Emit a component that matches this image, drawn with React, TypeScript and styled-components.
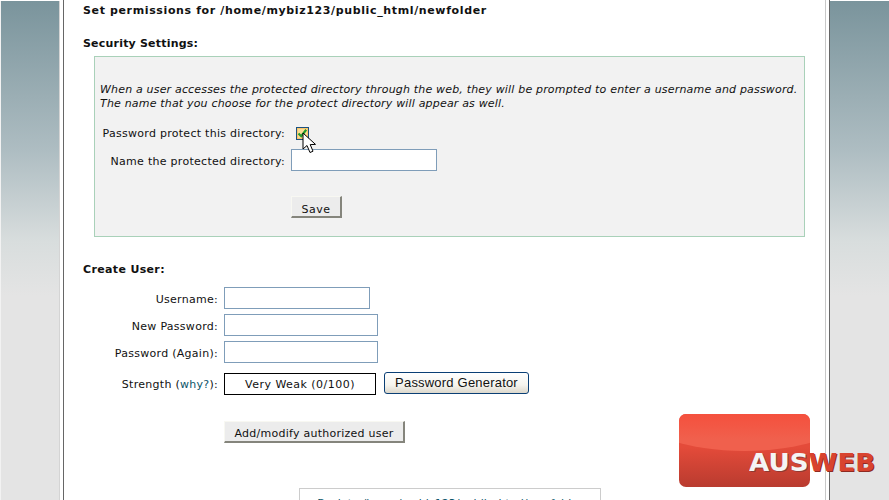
import React from "react";
import styled, { createGlobalStyle } from "styled-components";

const Global = createGlobalStyle`
  html, body { margin: 0; padding: 0; background: #fff; }
  body { font-family: "DejaVu Sans", Verdana, sans-serif; font-size: 11px; color: #111; }
`;

const Page = styled.div`
  position: relative;
  display: flex;
  width: 889px;
  height: 500px;
  overflow: hidden;
  background: #fff;
`;

const SIDE_FILL = "linear-gradient(180deg, #7a949c 0, #aebdc2 150px, #d8dddd 240px, #e4e4e4 295px, #e4e4e4 100%)";

const LeftSide = styled.div`
  flex: 0 0 58px;
  height: 499px;
  margin-top: 1px;
  background: ${SIDE_FILL};
  border-left: 1px solid #f2f2f2;
  border-right: 1px solid #d4d4d4;
`;

const RightSide = styled.div`
  flex: 0 0 59px;
  height: 499px;
  margin-top: 1px;
  background: ${SIDE_FILL};
`;

const Main = styled.main`
  flex: 1;
  margin-left: 3px;
  height: 500px;
  border-left: 1px solid #666;
  border-right: 1px solid #666;
  position: relative;
  padding: 0 0 0 19px;
`;

const RightEdge = styled.span`
  position: absolute;
  top: 0;
  right: 3px;
  width: 1px;
  height: 500px;
  background: #c8c8c8;
`;

const Heading = styled.h2<{ $top: number; $spacing: number }>`
  margin: ${(p) => p.$top}px 0 0;
  font-size: 11px;
  line-height: 14px;
  font-weight: 700;
  color: #111;
  letter-spacing: ${(p) => p.$spacing}px;
  white-space: nowrap;
`;

const Panel = styled.section`
  box-sizing: border-box;
  width: 711px;
  height: 181px;
  margin: 5px 0 0 11px;
  padding: 26px 0 0;
  background: #f2f2f2;
  border: 1px solid #a9d1b9;
`;

const Note = styled.p`
  margin: 0 0 0 5px;
  font-style: italic;
  line-height: 14px;
  letter-spacing: 0.18px;
  white-space: nowrap;
`;

const PanelForm = styled.div`
  display: grid;
  grid-template-columns: 190px 1fr;
  column-gap: 6px;
  align-items: center;
  margin-top: 16px;
`;

const Label = styled.label`
  padding-top: 4px;
  text-align: right;
  line-height: 14px;
  letter-spacing: 0.28px;
  white-space: nowrap;
`;

const CheckLabel = styled(Label)`
  align-self: start;
  padding-top: 0;
`;

const CheckCell = styled.div`
  height: 12px;
  margin-bottom: 10px;
  display: flex;
  align-items: center;
`;

const CheckBox = styled.span`
  box-sizing: border-box;
  display: flex;
  width: 13px;
  height: 13px;
  margin-left: 5px;
  background: #fbdc95;
  border: 1px solid #1c5180;
  box-shadow: inset 0 0 0 1px #f9c66a;
`;

const TextInput = styled.input<{ $w: number }>`
  box-sizing: border-box;
  display: block;
  width: ${(p) => p.$w}px;
  height: 22px;
  padding: 0 3px;
  background: #fff;
  border: 1px solid #7f9db9;
  border-radius: 0;
  outline: none;
`;

const FlatButton = styled.button`
  box-sizing: border-box;
  display: block;
  height: 22px;
  padding: 4px 0 0;
  font: 11px "DejaVu Sans", Verdana, sans-serif;
  color: #111;
  background: #ececec;
  border-style: solid;
  border-width: 1px 2px 2px 1px;
  border-color: #f8f8f2 #85857c #85857c #f8f8f2;
  letter-spacing: 0.25px;
`;

const SaveButton = styled(FlatButton)`
  width: 51px;
  margin-top: 25px;
  padding-top: 5px;
  grid-column: 2;
  letter-spacing: 0.5px;
`;

const UserForm = styled.div`
  display: grid;
  grid-template-columns: 135px 1fr;
  column-gap: 6px;
  row-gap: 5px;
  align-items: center;
  margin-top: 10px;
`;

const StrengthCell = styled.div`
  display: flex;
  align-items: flex-start;
  gap: 8px;
  margin-top: 4px;
`;

const StrengthLabel = styled(Label)`
  margin-top: 6px;
  padding-top: 0;
`;

const StrengthBox = styled.div`
  box-sizing: border-box;
  width: 152px;
  height: 22px;
  margin-top: 1px;
  border: 1px solid #000;
  text-align: center;
  line-height: 22px;
  letter-spacing: 0.47px;
`;

const GeneratorButton = styled.button`
  box-sizing: border-box;
  width: 145px;
  height: 22px;
  padding: 0 0 1px;
  font: 13px "Liberation Sans", Arial, sans-serif;
  letter-spacing: 0.2px;
  color: #111;
  background: linear-gradient(180deg, #fff 0, #f5f4ee 60%, #dcd8cc 100%);
  border: 1px solid #0a3f75;
  border-radius: 3px;
`;

const Link = styled.a`
  color: #0b5468;
  text-decoration: none;
`;

const AddButton = styled(FlatButton)`
  width: 181px;
  margin: 26px 0 0 141px;
`;

const BackBox = styled.div`
  box-sizing: border-box;
  width: 302px;
  height: 40px;
  margin: 45px 0 0 216px;
  padding-top: 8px;
  border: 1px solid #ccc;
  text-align: center;
  line-height: 14px;
  letter-spacing: 0.05px;
  white-space: nowrap;
`;

const Cursor = styled.svg`
  position: absolute;
  left: 302px;
  top: 132px;
`;

const Logo = styled.div`
  position: absolute;
  left: 679px;
  top: 414px;
  width: 131px;
  height: 73px;
  border-radius: 7px;
  background: linear-gradient(180deg, #e44b3a 45%, #b93b2f 100%);
  overflow: hidden;
`;

const LogoGloss = styled.div`
  position: absolute;
  left: -40px;
  top: -40px;
  width: 211px;
  height: 77px;
  border-radius: 0 0 50% 50%;
  background: linear-gradient(180deg, #f54f3c 50%, #f0604d 85%);
`;

const LogoText = styled.div`
  position: absolute;
  left: 749px;
  top: 449px;
  height: 28px;
  font: 700 24px/28px "DejaVu Sans", sans-serif;
  white-space: nowrap;
  transform-origin: left center;
  transform: scaleX(1.09);
`;

const LogoWord = styled.span<{ $c: string; $s: string }>`
  color: ${(p) => p.$c};
  text-shadow: 1px 1px 0 ${(p) => p.$s};
`;

export default function App() {
  return (
    <Page>
      <Global />
      <LeftSide />
      <Main>
        <RightEdge />
        <Heading $top={4} $spacing={0.63}>Set permissions for /home/mybiz123/public_html/newfolder</Heading>
        <Heading $top={19} $spacing={0.2}>Security Settings:</Heading>
        <Panel>
          <Note>When a user accesses the protected directory through the web, they will be prompted to enter a username and password.</Note>
          <Note>The name that you choose for the protect directory will appear as well.</Note>
          <PanelForm>
            <CheckLabel>Password protect this directory:</CheckLabel>
            <CheckCell>
              <CheckBox>
                <svg width="11" height="11" viewBox="0 0 11 11">
                  <path d="M1.5 5.5 L4.2 8.2 L9.2 1.8" fill="none" stroke="#1f9a2b" strokeWidth="2.2" />
                </svg>
              </CheckBox>
            </CheckCell>
            <Label>Name the protected directory:</Label>
            <TextInput $w={146} />
            <SaveButton>Save</SaveButton>
          </PanelForm>
        </Panel>
        <Heading $top={26} $spacing={0.35}>Create User:</Heading>
        <UserForm>
          <Label>Username:</Label>
          <TextInput $w={146} />
          <Label>New Password:</Label>
          <TextInput $w={154} />
          <Label>Password (Again):</Label>
          <TextInput $w={154} />
          <StrengthLabel>
            Strength (<Link href="#">why?</Link>):
          </StrengthLabel>
          <StrengthCell>
            <StrengthBox>Very Weak (0/100)</StrengthBox>
            <GeneratorButton>Password Generator</GeneratorButton>
          </StrengthCell>
        </UserForm>
        <AddButton>Add/modify authorized user</AddButton>
        <BackBox>
          <Link href="#">Back to /home/mybiz123/public_html/newfolder</Link>
        </BackBox>
      </Main>
      <RightSide />
      <Cursor width="15" height="23" viewBox="0 0 15 23">
        <path d="M1 1 L1 17 L5 13.5 L8 20.5 L11 19.2 L8.2 12.6 L13.5 12.4 Z" fill="#fff" stroke="#000" strokeWidth="1" strokeLinejoin="round" />
      </Cursor>
      <Logo>
        <LogoGloss />
      </Logo>
      <LogoText>
        <LogoWord $c="#f4f4f4" $s="#8f3a32">AUS</LogoWord>
        <LogoWord $c="#d8432f" $s="#8f2a22">WEB</LogoWord>
      </LogoText>
    </Page>
  );
}
